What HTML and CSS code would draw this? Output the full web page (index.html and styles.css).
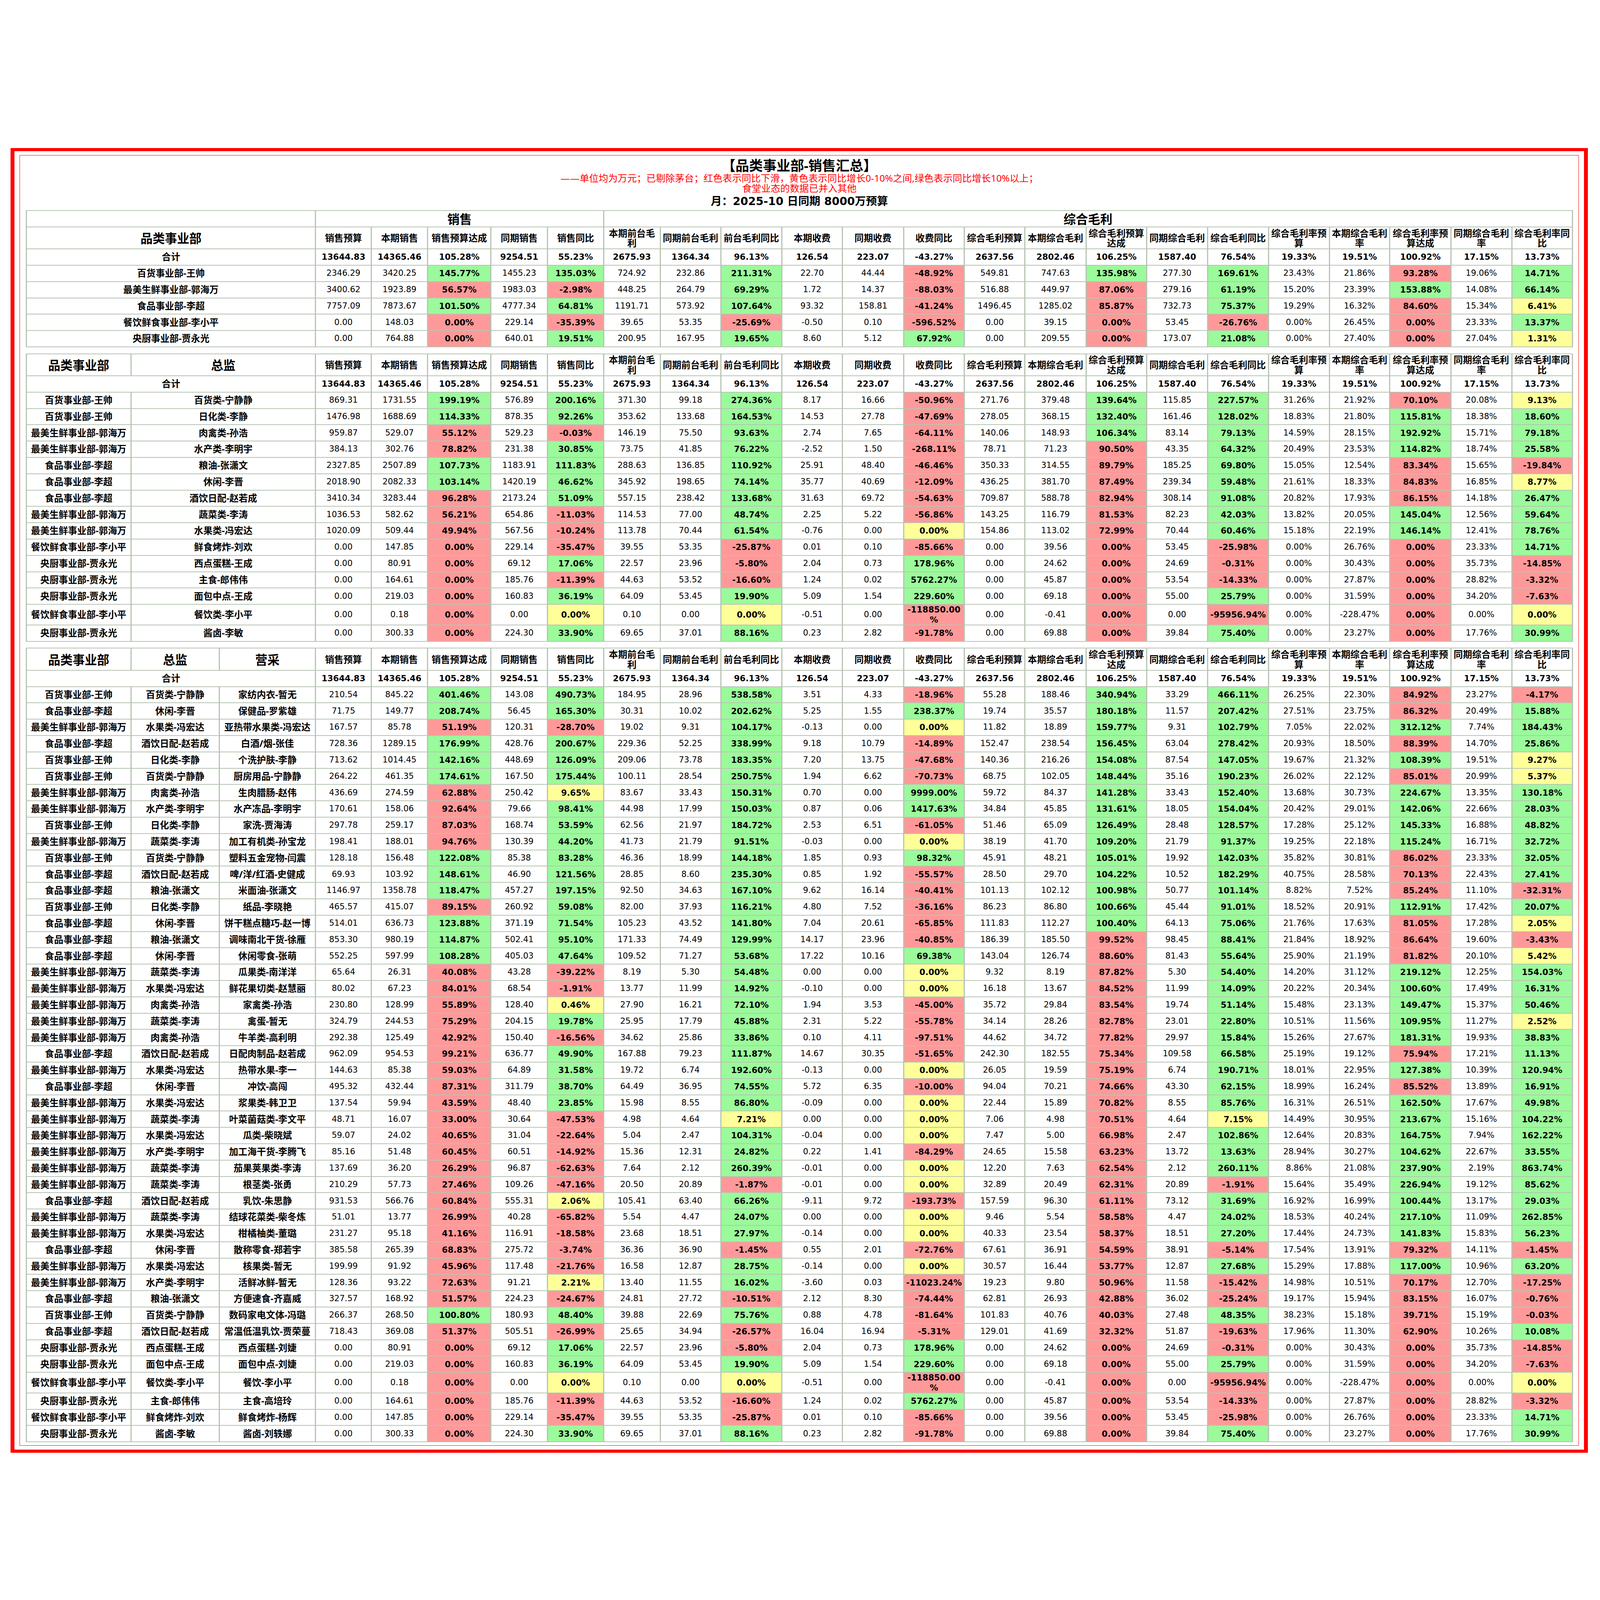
FILE: index.html
```html
<!DOCTYPE html>
<html lang="zh-CN">
<head>
<meta charset="utf-8">
<title>品类事业部-销售汇总</title>
<link rel="stylesheet" href="styles.css">
</head>
<body>
<div class="frame">
  <div class="inner">
    <div class="title">【品类事业部-销售汇总】</div>
    <div class="note">——单位均为万元；已剔除茅台；红色表示同比下滑，黄色表示同比增长0-10%之间,绿色表示同比增长10%以上；&#10;食堂业态的数据已并入其他</div>
    <div class="month">月：2025-10 日同期 8000万预算</div>

    <table class="report">
      <colgroup>
        <col class="l970">
        <col class="k1"><col class="k2"><col class="k3"><col class="k4"><col class="k5"><col class="k6"><col class="k7"><col class="k8"><col class="k9"><col class="k10"><col class="k11"><col class="k12"><col class="k13"><col class="k14"><col class="k15"><col class="k16"><col class="k17"><col class="k18"><col class="k19"><col class="k20"><col class="k21">
      </colgroup>
      <thead>
        <tr class="h1"><th></th><th colspan="5" class="grp">销售</th><th colspan="16" class="grp">综合毛利</th></tr>
        <tr class="h2"><th class="grp">品类事业部</th><th>销售预算</th><th>本期销售</th><th>销售预算达成</th><th>同期销售</th><th>销售同比</th><th>本期前台毛利</th><th>同期前台毛利</th><th>前台毛利同比</th><th>本期收费</th><th>同期收费</th><th>收费同比</th><th>综合毛利预算</th><th>本期综合毛利</th><th>综合毛利预算达成</th><th>同期综合毛利</th><th>综合毛利同比</th><th>综合毛利率预算</th><th>本期综合毛利率</th><th>综合毛利率预算达成</th><th>同期综合毛利率</th><th>综合毛利率同比</th></tr>
      </thead>
      <tbody id="s1"></tbody>
    </table>

    <table class="report">
      <colgroup>
        <col class="l351"><col class="l619">
        <col class="k1"><col class="k2"><col class="k3"><col class="k4"><col class="k5"><col class="k6"><col class="k7"><col class="k8"><col class="k9"><col class="k10"><col class="k11"><col class="k12"><col class="k13"><col class="k14"><col class="k15"><col class="k16"><col class="k17"><col class="k18"><col class="k19"><col class="k20"><col class="k21">
      </colgroup>
      <thead>
        <tr class="h2"><th class="grp">品类事业部</th><th class="grp">总监</th><th>销售预算</th><th>本期销售</th><th>销售预算达成</th><th>同期销售</th><th>销售同比</th><th>本期前台毛利</th><th>同期前台毛利</th><th>前台毛利同比</th><th>本期收费</th><th>同期收费</th><th>收费同比</th><th>综合毛利预算</th><th>本期综合毛利</th><th>综合毛利预算达成</th><th>同期综合毛利</th><th>综合毛利同比</th><th>综合毛利率预算</th><th>本期综合毛利率</th><th>综合毛利率预算达成</th><th>同期综合毛利率</th><th>综合毛利率同比</th></tr>
      </thead>
      <tbody id="s2"></tbody>
    </table>

    <table class="report">
      <colgroup>
        <col class="l351"><col class="l296"><col class="l323">
        <col class="k1"><col class="k2"><col class="k3"><col class="k4"><col class="k5"><col class="k6"><col class="k7"><col class="k8"><col class="k9"><col class="k10"><col class="k11"><col class="k12"><col class="k13"><col class="k14"><col class="k15"><col class="k16"><col class="k17"><col class="k18"><col class="k19"><col class="k20"><col class="k21">
      </colgroup>
      <thead>
        <tr class="h2"><th class="grp">品类事业部</th><th class="grp">总监</th><th class="grp">营采</th><th>销售预算</th><th>本期销售</th><th>销售预算达成</th><th>同期销售</th><th>销售同比</th><th>本期前台毛利</th><th>同期前台毛利</th><th>前台毛利同比</th><th>本期收费</th><th>同期收费</th><th>收费同比</th><th>综合毛利预算</th><th>本期综合毛利</th><th>综合毛利预算达成</th><th>同期综合毛利</th><th>综合毛利同比</th><th>综合毛利率预算</th><th>本期综合毛利率</th><th>综合毛利率预算达成</th><th>同期综合毛利率</th><th>综合毛利率同比</th></tr>
      </thead>
      <tbody id="s3"></tbody>
    </table>
  </div>
</div>
<script src="script.js"></script>
</body>
</html>
```

FILE: styles.css
```css
/* Horizontal unit: 1rem = 100 reference pixels across the window width.
   Vertical unit: --v = 1 reference pixel down the window height. */
html { font-size: calc(100vw / 53.66); }
:root { --v: calc(100vh / 7104); }
* { box-sizing: border-box; }
html, body { margin: 0; padding: 0; background: #ffffff; }
body {
  font-family: "DejaVu Sans", "Noto Sans CJK SC", sans-serif;
  color: #000000;
}
.frame {
  width: max-content;
  margin: calc(657 * var(--v)) 0 0 0.36rem;
  border-style: solid;
  border-color: #ff0000;
  border-width: calc(14 * var(--v)) 0.14rem;
  padding: calc(17 * var(--v)) 0.17rem;
}
.inner {
  border-style: solid;
  border-color: #ff0000;
  border-width: calc(2 * var(--v)) 0.02rem;
  padding: calc(14 * var(--v)) 0.19rem;
}
.title {
  text-align: center;
  font-family: "Noto Sans", "Noto Sans CJK SC", sans-serif;
  font-size: 0.46rem;
  font-weight: 700;
  line-height: calc(62 * var(--v));
}
.note {
  margin-top: calc(3 * var(--v));
  text-align: center;
  color: #ff0000;
  font-family: "Noto Sans", "Noto Sans CJK SC", sans-serif;
  font-size: 0.32rem;
  line-height: calc(44 * var(--v));
  white-space: pre-line;
}
.month {
  margin-top: calc(10 * var(--v));
  text-align: center;
  font-size: 0.37rem;
  font-weight: 700;
  line-height: calc(56 * var(--v));
}
.report {
  width: 51.85rem;
  table-layout: fixed;
  border-collapse: collapse;
  margin-top: calc(11 * var(--v));
}
.report + .report { margin-top: calc(27 * var(--v)); }
.report th,
.report td {
  border-style: solid;
  border-color: #b7c4b3;
  border-width: calc(4 * var(--v)) 0.04rem;
  text-align: center;
  vertical-align: middle;
  padding: 0 0.02rem;
  line-height: calc(44 * var(--v));
  overflow-wrap: anywhere;
}
.report th {
  font-family: "Noto Sans CJK SC", sans-serif;
  font-size: 0.31rem;
  font-weight: 700;
}
.report th.grp { font-size: 0.41rem; }
.report td { font-size: 0.275rem; font-weight: 400; }
.report td.lab {
  font-family: "Noto Sans", "Noto Sans CJK SC", sans-serif;
  font-size: 0.31rem;
  font-weight: 700;
  overflow-wrap: normal;
}
.report td.b { font-size: 0.28rem; font-weight: 700; }
.report td.g { background: #9bfa9b; }
.report td.r { background: #ff9999; }
.report td.y { background: #ffff99; }

.h1 { height: calc(72 * var(--v)); }
.h2 { height: calc(98 * var(--v)); }
.d { height: calc(72.5 * var(--v)); }

.l970 { width: 9.70rem; }
.l351 { width: 3.51rem; }
.l619 { width: 6.19rem; }
.l296 { width: 2.96rem; }
.l323 { width: 3.23rem; }
.k1 { width: 1.87rem; }
.k2 { width: 1.89rem; }
.k3 { width: 2.12rem; }
.k4 { width: 1.90rem; }
.k5 { width: 1.88rem; }
.k6 { width: 1.90rem; }
.k7 { width: 2.03rem; }
.k8 { width: 2.05rem; }
.k9 { width: 2.03rem; }
.k10 { width: 2.05rem; }
.k11 { width: 2.04rem; }
.k12 { width: 2.03rem; }
.k13 { width: 2.05rem; }
.k14 { width: 2.03rem; }
.k15 { width: 2.05rem; }
.k16 { width: 2.04rem; }
.k17 { width: 2.04rem; }
.k18 { width: 2.03rem; }
.k19 { width: 2.05rem; }
.k20 { width: 2.04rem; }
.k21 { width: 2.03rem; }
```

FILE: script.js
```js
(function () {
  var D = {
    B: "百货事业部-王帅",
    S: "最美生鲜事业部-郭海万",
    F: "食品事业部-李超",
    C: "餐饮鲜食事业部-李小平",
    Y: "央厨事业部-贾永光"
  };
  var TOTAL = "13644.83 14365.46 105.28% 9254.51 55.23% 2675.93 1364.34 96.13% 126.54 223.07 -43.27% 2637.56 2802.46 106.25% 1587.40 76.54% 19.33% 19.51% 100.92% 17.15% 13.73%";

  var S1 = [
    "B|2346.29 3420.25 145.77%g 1455.23 135.03%g 724.92 232.86 211.31%g 22.70 44.44 -48.92%r 549.81 747.63 135.98%g 277.30 169.61%g 23.43% 21.86% 93.28%r 19.06% 14.71%g",
    "S|3400.62 1923.89 56.57%r 1983.03 -2.98%r 448.25 264.79 69.29%g 1.72 14.37 -88.03%r 516.88 449.97 87.06%r 279.16 61.19%g 15.20% 23.39% 153.88%g 14.08% 66.14%g",
    "F|7757.09 7873.67 101.50%g 4777.34 64.81%g 1191.71 573.92 107.64%g 93.32 158.81 -41.24%r 1496.45 1285.02 85.87%r 732.73 75.37%g 19.29% 16.32% 84.60%r 15.34% 6.41%y",
    "C|0.00 148.03 0.00%r 229.14 -35.39%r 39.65 53.35 -25.69%r -0.50 0.10 -596.52%r 0.00 39.15 0.00%r 53.45 -26.76%r 0.00% 26.45% 0.00%r 23.33% 13.37%g",
    "Y|0.00 764.88 0.00%r 640.01 19.51%g 200.95 167.95 19.65%g 8.60 5.12 67.92%g 0.00 209.55 0.00%r 173.07 21.08%g 0.00% 27.40% 0.00%r 27.04% 1.31%y"
  ];

  var S2 = [
    "B|百货类-宁静静|869.31 1731.55 199.19%g 576.89 200.16%g 371.30 99.18 274.36%g 8.17 16.66 -50.96%r 271.76 379.48 139.64%g 115.85 227.57%g 31.26% 21.92% 70.10%r 20.08% 9.13%y",
    "B|日化类-李静|1476.98 1688.69 114.33%g 878.35 92.26%g 353.62 133.68 164.53%g 14.53 27.78 -47.69%r 278.05 368.15 132.40%g 161.46 128.02%g 18.83% 21.80% 115.81%g 18.38% 18.60%g",
    "S|肉禽类-孙浩|959.87 529.07 55.12%r 529.23 -0.03%r 146.19 75.50 93.63%g 2.74 7.65 -64.11%r 140.06 148.93 106.34%g 83.14 79.13%g 14.59% 28.15% 192.92%g 15.71% 79.18%g",
    "S|水产类-李明宇|384.13 302.76 78.82%r 231.38 30.85%g 73.75 41.85 76.22%g -2.52 1.50 -268.11%r 78.71 71.23 90.50%r 43.35 64.32%g 20.49% 23.53% 114.82%g 18.74% 25.58%g",
    "F|粮油-张潇文|2327.85 2507.89 107.73%g 1183.91 111.83%g 288.63 136.85 110.92%g 25.91 48.40 -46.46%r 350.33 314.55 89.79%r 185.25 69.80%g 15.05% 12.54% 83.34%r 15.65% -19.84%r",
    "F|休闲-李晋|2018.90 2082.33 103.14%g 1420.19 46.62%g 345.92 198.65 74.14%g 35.77 40.69 -12.09%r 436.25 381.70 87.49%r 239.34 59.48%g 21.61% 18.33% 84.83%r 16.85% 8.77%y",
    "F|酒饮日配-赵若成|3410.34 3283.44 96.28%r 2173.24 51.09%g 557.15 238.42 133.68%g 31.63 69.72 -54.63%r 709.87 588.78 82.94%r 308.14 91.08%g 20.82% 17.93% 86.15%r 14.18% 26.47%g",
    "S|蔬菜类-李涛|1036.53 582.62 56.21%r 654.86 -11.03%r 114.53 77.00 48.74%g 2.25 5.22 -56.86%r 143.25 116.79 81.53%r 82.23 42.03%g 13.82% 20.05% 145.04%g 12.56% 59.64%g",
    "S|水果类-冯宏达|1020.09 509.44 49.94%r 567.56 -10.24%r 113.78 70.44 61.54%g -0.76 0.00 0.00%y 154.86 113.02 72.99%r 70.44 60.46%g 15.18% 22.19% 146.14%g 12.41% 78.76%g",
    "C|鲜食烤炸-刘欢|0.00 147.85 0.00%r 229.14 -35.47%r 39.55 53.35 -25.87%r 0.01 0.10 -85.66%r 0.00 39.56 0.00%r 53.45 -25.98%r 0.00% 26.76% 0.00%r 23.33% 14.71%g",
    "Y|西点蛋糕-王成|0.00 80.91 0.00%r 69.12 17.06%g 22.57 23.96 -5.80%r 2.04 0.73 178.96%g 0.00 24.62 0.00%r 24.69 -0.31%r 0.00% 30.43% 0.00%r 35.73% -14.85%r",
    "Y|主食-郎伟伟|0.00 164.61 0.00%r 185.76 -11.39%r 44.63 53.52 -16.60%r 1.24 0.02 5762.27%g 0.00 45.87 0.00%r 53.54 -14.33%r 0.00% 27.87% 0.00%r 28.82% -3.32%r",
    "Y|面包中点-王成|0.00 219.03 0.00%r 160.83 36.19%g 64.09 53.45 19.90%g 5.09 1.54 229.60%g 0.00 69.18 0.00%r 55.00 25.79%g 0.00% 31.59% 0.00%r 34.20% -7.63%r",
    "C|餐饮类-李小平|0.00 0.18 0.00%r 0.00 0.00%y 0.10 0.00 0.00%y -0.51 0.00 -118850.00%r 0.00 -0.41 0.00%r 0.00 -95956.94%r 0.00% -228.47% 0.00%r 0.00% 0.00%y",
    "Y|酱卤-李敏|0.00 300.33 0.00%r 224.30 33.90%g 69.65 37.01 88.16%g 0.23 2.82 -91.78%r 0.00 69.88 0.00%r 39.84 75.40%g 0.00% 23.27% 0.00%r 17.76% 30.99%g"
  ];

  var S3 = [
    "B|百货类-宁静静|家纺内衣-暂无|210.54 845.22 401.46%g 143.08 490.73%g 184.95 28.96 538.58%g 3.51 4.33 -18.96%r 55.28 188.46 340.94%g 33.29 466.11%g 26.25% 22.30% 84.92%r 23.27% -4.17%r",
    "F|休闲-李晋|保健品-罗紫雄|71.75 149.77 208.74%g 56.45 165.30%g 30.31 10.02 202.62%g 5.25 1.55 238.37%g 19.74 35.57 180.18%g 11.57 207.42%g 27.51% 23.75% 86.32%r 20.49% 15.88%g",
    "S|水果类-冯宏达|亚热带水果类-冯宏达|167.57 85.78 51.19%r 120.31 -28.70%r 19.02 9.31 104.17%g -0.13 0.00 0.00%y 11.82 18.89 159.77%g 9.31 102.79%g 7.05% 22.02% 312.12%g 7.74% 184.43%g",
    "F|酒饮日配-赵若成|白酒/烟-张佳|728.36 1289.15 176.99%g 428.76 200.67%g 229.36 52.25 338.99%g 9.18 10.79 -14.89%r 152.47 238.54 156.45%g 63.04 278.42%g 20.93% 18.50% 88.39%r 14.70% 25.86%g",
    "B|日化类-李静|个洗护肤-李静|713.62 1014.45 142.16%g 448.69 126.09%g 209.06 73.78 183.35%g 7.20 13.75 -47.68%r 140.36 216.26 154.08%g 87.54 147.05%g 19.67% 21.32% 108.39%g 19.51% 9.27%y",
    "B|百货类-宁静静|厨房用品-宁静静|264.22 461.35 174.61%g 167.50 175.44%g 100.11 28.54 250.75%g 1.94 6.62 -70.73%r 68.75 102.05 148.44%g 35.16 190.23%g 26.02% 22.12% 85.01%r 20.99% 5.37%y",
    "S|肉禽类-孙浩|生肉腊肠-赵伟|436.69 274.59 62.88%r 250.42 9.65%y 83.67 33.43 150.31%g 0.70 0.00 9999.00%g 59.72 84.37 141.28%g 33.43 152.40%g 13.68% 30.73% 224.67%g 13.35% 130.18%g",
    "S|水产类-李明宇|水产冻品-李明宇|170.61 158.06 92.64%r 79.66 98.41%g 44.98 17.99 150.03%g 0.87 0.06 1417.63%g 34.84 45.85 131.61%g 18.05 154.04%g 20.42% 29.01% 142.06%g 22.66% 28.03%g",
    "B|日化类-李静|家洗-贾海涛|297.78 259.17 87.03%r 168.74 53.59%g 62.56 21.97 184.72%g 2.53 6.51 -61.05%r 51.46 65.09 126.49%g 28.48 128.57%g 17.28% 25.12% 145.33%g 16.88% 48.82%g",
    "S|蔬菜类-李涛|加工有机类-孙宝龙|198.41 188.01 94.76%r 130.39 44.20%g 41.73 21.79 91.51%g -0.03 0.00 0.00%y 38.19 41.70 109.20%g 21.79 91.37%g 19.25% 22.18% 115.24%g 16.71% 32.72%g",
    "B|百货类-宁静静|塑料五金宠物-闫震|128.18 156.48 122.08%g 85.38 83.28%g 46.36 18.99 144.18%g 1.85 0.93 98.32%g 45.91 48.21 105.01%g 19.92 142.03%g 35.82% 30.81% 86.02%r 23.33% 32.05%g",
    "F|酒饮日配-赵若成|啤/洋/红酒-史健成|69.93 103.92 148.61%g 46.90 121.56%g 28.85 8.60 235.30%g 0.85 1.92 -55.57%r 28.50 29.70 104.22%g 10.52 182.29%g 40.75% 28.58% 70.13%r 22.43% 27.41%g",
    "F|粮油-张潇文|米面油-张潇文|1146.97 1358.78 118.47%g 457.27 197.15%g 92.50 34.63 167.10%g 9.62 16.14 -40.41%r 101.13 102.12 100.98%g 50.77 101.14%g 8.82% 7.52% 85.24%r 11.10% -32.31%r",
    "B|日化类-李静|纸品-李晓艳|465.57 415.07 89.15%r 260.92 59.08%g 82.00 37.93 116.21%g 4.80 7.52 -36.16%r 86.23 86.80 100.66%g 45.44 91.01%g 18.52% 20.91% 112.91%g 17.42% 20.07%g",
    "F|休闲-李晋|饼干糕点糖巧-赵一博|514.01 636.73 123.88%g 371.19 71.54%g 105.23 43.52 141.80%g 7.04 20.61 -65.85%r 111.83 112.27 100.40%g 64.13 75.06%g 21.76% 17.63% 81.05%r 17.28% 2.05%y",
    "F|粮油-张潇文|调味南北干货-徐雁|853.30 980.19 114.87%g 502.41 95.10%g 171.33 74.49 129.99%g 14.17 23.96 -40.85%r 186.39 185.50 99.52%r 98.45 88.41%g 21.84% 18.92% 86.64%r 19.60% -3.43%r",
    "F|休闲-李晋|休闲零食-张萌|552.25 597.99 108.28%g 405.03 47.64%g 109.52 71.27 53.68%g 17.22 10.16 69.38%g 143.04 126.74 88.60%r 81.43 55.64%g 25.90% 21.19% 81.82%r 20.10% 5.42%y",
    "S|蔬菜类-李涛|瓜果类-南洋洋|65.64 26.31 40.08%r 43.28 -39.22%r 8.19 5.30 54.48%g 0.00 0.00 0.00%y 9.32 8.19 87.82%r 5.30 54.40%g 14.20% 31.12% 219.12%g 12.25% 154.03%g",
    "S|水果类-冯宏达|鲜花果切类-赵慧丽|80.02 67.23 84.01%r 68.54 -1.91%r 13.77 11.99 14.92%g -0.10 0.00 0.00%y 16.18 13.67 84.52%r 11.99 14.09%g 20.22% 20.34% 100.60%g 17.49% 16.31%g",
    "S|肉禽类-孙浩|家禽类-孙浩|230.80 128.99 55.89%r 128.40 0.46%y 27.90 16.21 72.10%g 1.94 3.53 -45.00%r 35.72 29.84 83.54%r 19.74 51.14%g 15.48% 23.13% 149.47%g 15.37% 50.46%g",
    "S|蔬菜类-李涛|禽蛋-暂无|324.79 244.53 75.29%r 204.15 19.78%g 25.95 17.79 45.88%g 2.31 5.22 -55.78%r 34.14 28.26 82.78%r 23.01 22.80%g 10.51% 11.56% 109.95%g 11.27% 2.52%y",
    "S|肉禽类-孙浩|牛羊类-高利明|292.38 125.49 42.92%r 150.40 -16.56%r 34.62 25.86 33.86%g 0.10 4.11 -97.51%r 44.62 34.72 77.82%r 29.97 15.84%g 15.26% 27.67% 181.31%g 19.93% 38.83%g",
    "F|酒饮日配-赵若成|日配肉制品-赵若成|962.09 954.53 99.21%r 636.77 49.90%g 167.88 79.23 111.87%g 14.67 30.35 -51.65%r 242.30 182.55 75.34%r 109.58 66.58%g 25.19% 19.12% 75.94%r 17.21% 11.13%g",
    "S|水果类-冯宏达|热带水果-李一|144.63 85.38 59.03%r 64.89 31.58%g 19.72 6.74 192.60%g -0.13 0.00 0.00%y 26.05 19.59 75.19%r 6.74 190.71%g 18.01% 22.95% 127.38%g 10.39% 120.94%g",
    "F|休闲-李晋|冲饮-高闯|495.32 432.44 87.31%r 311.79 38.70%g 64.49 36.95 74.55%g 5.72 6.35 -10.00%r 94.04 70.21 74.66%r 43.30 62.15%g 18.99% 16.24% 85.52%r 13.89% 16.91%g",
    "S|水果类-冯宏达|浆果类-韩卫卫|137.54 59.94 43.59%r 48.40 23.85%g 15.98 8.55 86.80%g -0.09 0.00 0.00%y 22.44 15.89 70.82%r 8.55 85.76%g 16.31% 26.51% 162.50%g 17.67% 49.98%g",
    "S|蔬菜类-李涛|叶菜菌菇类-李文平|48.71 16.07 33.00%r 30.64 -47.53%r 4.98 4.64 7.21%y 0.00 0.00 0.00%y 7.06 4.98 70.51%r 4.64 7.15%y 14.49% 30.95% 213.67%g 15.16% 104.22%g",
    "S|水果类-冯宏达|瓜类-柴晓斌|59.07 24.02 40.65%r 31.04 -22.64%r 5.04 2.47 104.31%g -0.04 0.00 0.00%y 7.47 5.00 66.98%r 2.47 102.86%g 12.64% 20.83% 164.75%g 7.94% 162.22%g",
    "S|水产类-李明宇|加工海干货-李腾飞|85.16 51.48 60.45%r 60.51 -14.92%r 15.36 12.31 24.82%g 0.22 1.41 -84.29%r 24.65 15.58 63.23%r 13.72 13.63%g 28.94% 30.27% 104.62%g 22.67% 33.55%g",
    "S|蔬菜类-李涛|茄果荚果类-李涛|137.69 36.20 26.29%r 96.87 -62.63%r 7.64 2.12 260.39%g -0.01 0.00 0.00%y 12.20 7.63 62.54%r 2.12 260.11%g 8.86% 21.08% 237.90%g 2.19% 863.74%g",
    "S|蔬菜类-李涛|根茎类-张勇|210.29 57.73 27.46%r 109.26 -47.16%r 20.50 20.89 -1.87%r -0.01 0.00 0.00%y 32.89 20.49 62.31%r 20.89 -1.91%r 15.64% 35.49% 226.94%g 19.12% 85.62%g",
    "F|酒饮日配-赵若成|乳饮-朱思静|931.53 566.76 60.84%r 555.31 2.06%y 105.41 63.40 66.26%g -9.11 9.72 -193.73%r 157.59 96.30 61.11%r 73.12 31.69%g 16.92% 16.99% 100.44%g 13.17% 29.03%g",
    "S|蔬菜类-李涛|结球花菜类-柴冬炼|51.01 13.77 26.99%r 40.28 -65.82%r 5.54 4.47 24.07%g 0.00 0.00 0.00%y 9.46 5.54 58.58%r 4.47 24.02%g 18.53% 40.24% 217.10%g 11.09% 262.85%g",
    "S|水果类-冯宏达|柑橘柚类-董璐|231.27 95.18 41.16%r 116.91 -18.58%r 23.68 18.51 27.97%g -0.14 0.00 0.00%y 40.33 23.54 58.37%r 18.51 27.20%g 17.44% 24.73% 141.83%g 15.83% 56.23%g",
    "F|休闲-李晋|散称零食-郑若宇|385.58 265.39 68.83%r 275.72 -3.74%r 36.36 36.90 -1.45%r 0.55 2.01 -72.76%r 67.61 36.91 54.59%r 38.91 -5.14%r 17.54% 13.91% 79.32%r 14.11% -1.45%r",
    "S|水果类-冯宏达|核果类-暂无|199.99 91.92 45.96%r 117.48 -21.76%r 16.58 12.87 28.75%g -0.14 0.00 0.00%y 30.57 16.44 53.77%r 12.87 27.68%g 15.29% 17.88% 117.00%g 10.96% 63.20%g",
    "S|水产类-李明宇|活鲜冰鲜-暂无|128.36 93.22 72.63%r 91.21 2.21%y 13.40 11.55 16.02%g -3.60 0.03 -11023.24%r 19.23 9.80 50.96%r 11.58 -15.42%r 14.98% 10.51% 70.17%r 12.70% -17.25%r",
    "F|粮油-张潇文|方便速食-齐嘉威|327.57 168.92 51.57%r 224.23 -24.67%r 24.81 27.72 -10.51%r 2.12 8.30 -74.44%r 62.81 26.93 42.88%r 36.02 -25.24%r 19.17% 15.94% 83.15%r 16.07% -0.76%r",
    "B|百货类-宁静静|数码家电文体-冯璐|266.37 268.50 100.80%g 180.93 48.40%g 39.88 22.69 75.76%g 0.88 4.78 -81.64%r 101.83 40.76 40.03%r 27.48 48.35%g 38.23% 15.18% 39.71%r 15.19% -0.03%r",
    "F|酒饮日配-赵若成|常温低温乳饮-贾荣蔓|718.43 369.08 51.37%r 505.51 -26.99%r 25.65 34.94 -26.57%r 16.04 16.94 -5.31%r 129.01 41.69 32.32%r 51.87 -19.63%r 17.96% 11.30% 62.90%r 10.26% 10.08%g",
    "Y|西点蛋糕-王成|西点蛋糕-刘婕|0.00 80.91 0.00%r 69.12 17.06%g 22.57 23.96 -5.80%r 2.04 0.73 178.96%g 0.00 24.62 0.00%r 24.69 -0.31%r 0.00% 30.43% 0.00%r 35.73% -14.85%r",
    "Y|面包中点-王成|面包中点-刘婕|0.00 219.03 0.00%r 160.83 36.19%g 64.09 53.45 19.90%g 5.09 1.54 229.60%g 0.00 69.18 0.00%r 55.00 25.79%g 0.00% 31.59% 0.00%r 34.20% -7.63%r",
    "C|餐饮类-李小平|餐饮-李小平|0.00 0.18 0.00%r 0.00 0.00%y 0.10 0.00 0.00%y -0.51 0.00 -118850.00%r 0.00 -0.41 0.00%r 0.00 -95956.94%r 0.00% -228.47% 0.00%r 0.00% 0.00%y",
    "Y|主食-郎伟伟|主食-高培玲|0.00 164.61 0.00%r 185.76 -11.39%r 44.63 53.52 -16.60%r 1.24 0.02 5762.27%g 0.00 45.87 0.00%r 53.54 -14.33%r 0.00% 27.87% 0.00%r 28.82% -3.32%r",
    "C|鲜食烤炸-刘欢|鲜食烤炸-杨辉|0.00 147.85 0.00%r 229.14 -35.47%r 39.55 53.35 -25.87%r 0.01 0.10 -85.66%r 0.00 39.56 0.00%r 53.45 -25.98%r 0.00% 26.76% 0.00%r 23.33% 14.71%g",
    "Y|酱卤-李敏|酱卤-刘轶娜|0.00 300.33 0.00%r 224.30 33.90%g 69.65 37.01 88.16%g 0.23 2.82 -91.78%r 0.00 69.88 0.00%r 39.84 75.40%g 0.00% 23.27% 0.00%r 17.76% 30.99%g"
  ];

  function cell(tr, text, cls) {
    var td = document.createElement("td");
    if (cls) td.className = cls;
    td.textContent = text;
    tr.appendChild(td);
    return td;
  }

  function fill(id, nLab, rows) {
    var tb = document.getElementById(id);
    var tot = document.createElement("tr");
    tot.className = "d";
    var first = cell(tot, "合计", "lab");
    first.colSpan = nLab;
    TOTAL.split(" ").forEach(function (v) { cell(tot, v, "b"); });
    tb.appendChild(tot);

    rows.forEach(function (r) {
      var parts = r.split("|");
      var tr = document.createElement("tr");
      tr.className = "d";
      for (var i = 0; i < nLab; i++) {
        cell(tr, D[parts[i]] || parts[i], "lab");
      }
      parts[nLab].split(" ").forEach(function (v) {
        var m = v.match(/^(.*?)([gry])$/);
        if (m) cell(tr, m[1], "b " + m[2]);
        else cell(tr, v, "");
      });
      tb.appendChild(tr);
    });
  }

  fill("s1", 1, S1);
  fill("s2", 2, S2);
  fill("s3", 3, S3);
})();
```
